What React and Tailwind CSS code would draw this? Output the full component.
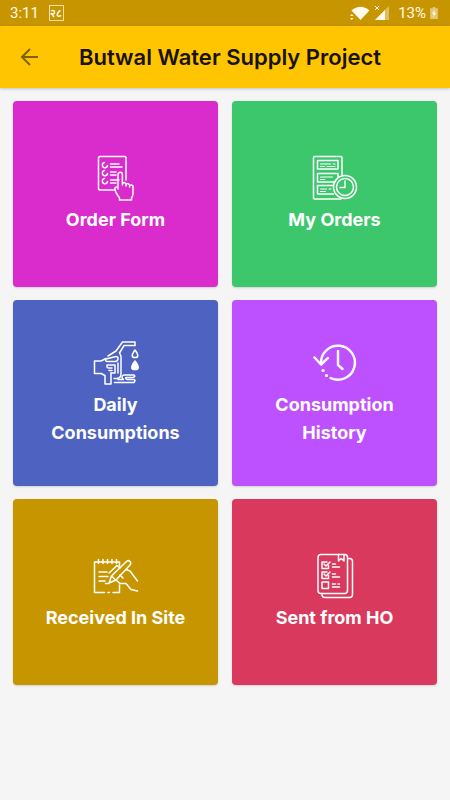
const line = {
  viewBox: '0 0 48 48',
  fill: 'none',
  stroke: 'currentColor',
  strokeWidth: 1.5,
  strokeLinecap: 'round',
  strokeLinejoin: 'round',
  className: 'size-12',
  'aria-hidden': true,
};

function OrderFormIcon() {
  return (
    <svg {...line}>
      <path d="M23 36H8a1.5 1.5 0 0 1-1.5-1.5V4A1.5 1.5 0 0 1 8 2.5h24.5A1.5 1.5 0 0 1 34 4v22" />
      {[11, 19, 27].map((y) => (
        <g key={y}>
          <path d={`M12.5 ${y - 2.5}a2.600 2.600 0 1 0 3 3`} />
          <path d={`M18.5 ${y - 1}H${y === 19 ? 24 : 27}M18.5 ${y + 2}H${y === 11 ? 30 : 24}`} />
        </g>
      ))}
      <path d="M26 35V20.5a2.200 2.200 0 0 1 4.400 0V31v-1q1.500-3 3.600 0v2-1q1.500-3 3.600 0v2-1q1.500-2 3.400 0v7q0 3-1.500 5v2H27.500v-2l-3-4.500q-1.500-3-1.500-5t3-1.500" />
    </svg>
  );
}

function MyOrdersIcon() {
  return (
    <svg {...line}>
      <path d="M31 22V3.500a1 1 0 0 0-1-1H3.500a1 1 0 0 0-1 1V44a1 1 0 0 0 1 1H30" />
      <path d="M6.500 6.500h20.500v8.500H6.500zM24 28H6.500v-8.500H27V23M22.500 40h-16v-8.500h16" />
      <path d="M9.500 10h10M22 10h2M9.500 12.500h4M16 12.500h8M9.500 23h12M9.500 25.500h4M9.500 35h6M18 35h2M9.500 37.500h5" strokeWidth="1.200" />
      <circle cx="34" cy="33" r="11.500" />
      <circle cx="34" cy="33" r="8.500" />
      <path d="M34 27v6.500h-5" />
    </svg>
  );
}

function FuelIcon() {
  return (
    <svg {...line}>
      <path d="M43 6.500V3H30.500L24 12l-8 5" />
      <path d="M43 6.500H32L27.500 14l1.500 3v18q0 4-4 4.500h-3" />
      <path d="M14 19.500 9 22H2.500v12.500H9l4 2V45h6V34" />
      <path d="m14 20 10-2.500q2.500 0 2 2.500t-3 2.500h-8q-2 0-1-2.500z" />
      <path d="M15 26h8v8h-4M15 26v2q0 1 2 1h3M20 31.500h-3" />
      <path d="M26 24v10" />
      <path d="M43 11q-5.500 7.500 0 7.500t0-7.500z" />
      <path d="M43 22q-6.500 8.500 0 8.500t0-8.500z" fill="currentColor" />
      <path d="M22.500 43.500H42q2.500-3-1-3h-6q-3-2 0-2h6q3-1 1-2.500H31.500q-3 2 0 4.500H26" />
    </svg>
  );
}

function HistoryIcon() {
  return (
    <svg {...line} strokeWidth="2.400">
      <path d="M10 25a17 17 0 1 1 9.500 14" />
      <path d="m3.500 18.500 6.500 7 7-6.500" />
      <path d="M27 12v14l4.500 4" />
      <path d="M12 31.500h.1M15.500 36.500h.1" strokeWidth="3.200" />
    </svg>
  );
}

function ReceivedIcon() {
  return (
    <svg {...line}>
      <path d="M27.500 14v-4h-25v30.500h10M16 40.500h1.500M21 40.500h6.500V33" />
      <path d="M6.500 7.500v4M11 7.500v4M15.500 7.500v4M20 7.500v4M24.500 7.500v4" />
      <path d="M7 20h8M7 24.500h9M7 29h6" />
      <path d="m17 31 2.500-7L34.500 9.500a2.400 2.400 0 0 1 3.500 3.500L24 28zM19.500 24l4 4" />
      <path d="m17 21 8-7.500 3 2.500M13.500 31.500H17" />
      <path d="m34 17.500 4 1.500 7.500 10M24 28l4 3.500h6l5 6 6.500 1.500M28 23l3 3" />
    </svg>
  );
}

function SentIcon() {
  return (
    <svg {...line}>
      <rect x="7" y="2.500" width="29.500" height="39" rx="3" />
      <path d="M37 6.500h1.500a3 3 0 0 1 3 3v33a3 3 0 0 1-3 3H14a3 3 0 0 1-3-3v-1" />
      <path d="M27.500 2.500V9l2.700-2.500L33 9V2.500" />
      {[10, 20].map((y) => (
        <path key={y} d={`M16 ${y}h-5v6.500h6.500v-3M13 ${y + 2}l2 2 4-4M21.500 ${y + 2}h3M21.500 ${y + 5}h7`} />
      ))}
      <path d="M11 30h6.500v6.500H11zM21.500 32h3M27 32h1.500M21.500 35h7" />
    </svg>
  );
}

const tiles = [
  { label: 'Order Form', color: 'bg-[#da2bcd]', Icon: OrderFormIcon },
  { label: 'My Orders', color: 'bg-[#3dc76c]', Icon: MyOrdersIcon },
  { label: 'Daily Consumptions', color: 'bg-[#4e63c1]', Icon: FuelIcon },
  { label: 'Consumption History', color: 'bg-[#bd51ff]', Icon: HistoryIcon },
  { label: 'Received In Site', color: 'bg-[#c79500]', Icon: ReceivedIcon },
  { label: 'Sent from HO', color: 'bg-[#d9395d]', Icon: SentIcon },
];

function StatusBar() {
  return (
    <div className="flex h-[26px] items-center justify-between bg-[#c79500] pr-3 pl-[10px] font-[Roboto,sans-serif] text-[15px] text-[#fffbea]">
      <div className="flex items-center gap-[10px]">
        <span>3:11</span>
        <span className="flex h-4 w-[15px] items-center justify-center border border-[#f3dfa0] text-[11px] leading-none font-bold">२८</span>
      </div>
      <div className="flex items-center gap-1">
        <svg viewBox="0 0 20 16" className="h-4 w-5" fill="currentColor" aria-hidden="true">
          <path d="M1.500 5.500Q10.500-2 19.500 5.500L10.500 15z" />
          <path d="M0 11h3.500L1.800 9zM0 13h3.500l-1.700 2z" />
        </svg>
        <svg viewBox="0 0 16 16" className="size-4" fill="currentColor" aria-hidden="true">
          <path d="M15 1v14H1z" opacity=".4" />
          <path d="M11 5v10H1z" />
          <path d="m1 1 4 4M5 1 1 5" stroke="currentColor" strokeWidth="1" />
        </svg>
        <span className="ml-1">13%</span>
        <svg viewBox="0 0 9 14" className="h-3 w-2" aria-hidden="true">
          <path d="M3 0h3v1.500h3V14H0V1.500h3z" fill="currentColor" opacity=".5" />
          <path d="M5.500 3 2 8h2.200L3.500 12 7 7H4.800z" fill="currentColor" />
        </svg>
      </div>
    </div>
  );
}

export default function App() {
  return (
    <div className="min-h-screen bg-[#f5f5f5]">
      <StatusBar />
      <header className="relative grid h-[62px] grid-cols-[70px_1fr_60px] items-center bg-[#ffc501] shadow-[0_1px_3px_rgba(0,0,0,0.2)]">
        <button type="button" aria-label="Back" className="flex h-full items-center pl-5 text-[#80620a]">
          <svg viewBox="0 0 20 20" className="size-5" fill="none" stroke="currentColor" strokeWidth="2" aria-hidden="true">
            <path d="M18 10H2.500M10 2 2 10l8 8" />
          </svg>
        </button>
        <h1 className="text-center font-[Inter,sans-serif] text-[22px] font-semibold whitespace-nowrap text-[#181200]">
          Butwal Water Supply Project
        </h1>
      </header>
      <main className="grid grid-cols-2 gap-x-[14px] gap-y-[13px] p-[13px]">
        {tiles.map(({ label, color, Icon }) => (
          <button
            key={label}
            type="button"
            className={`flex h-[186px] flex-col items-center justify-center gap-1 rounded-sm px-8 text-white shadow-[0_1px_2px_rgba(0,0,0,0.15)] ${color}`}
          >
            <Icon />
            <span className="font-[Inter,sans-serif] text-[18px] leading-7 font-bold">{label}</span>
          </button>
        ))}
      </main>
    </div>
  );
}
